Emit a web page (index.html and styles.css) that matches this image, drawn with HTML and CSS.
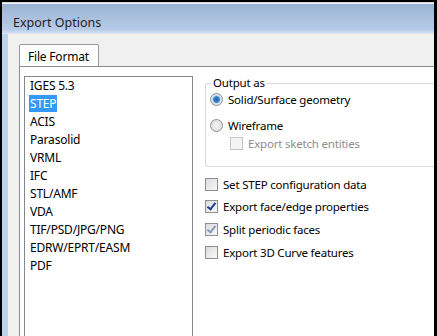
FILE: index.html
```html
<!DOCTYPE html>
<html lang="en">
<head>
  <meta charset="UTF-8">
  <title>Export Options</title>
  <link rel="stylesheet" href="styles.css">
</head>
<body>
  <div class="window">
    <div class="titlebar">Export Options</div>
    <div class="client">
      <div class="tabs">
        <div class="tab">File Format</div>
      </div>
      <div class="panel">
        <ul class="formats">
          <li>IGES 5.3</li>
          <li><span class="selected">STEP</span></li>
          <li>ACIS</li>
          <li>Parasolid</li>
          <li>VRML</li>
          <li>IFC</li>
          <li>STL/AMF</li>
          <li>VDA</li>
          <li>TIF/PSD/JPG/PNG</li>
          <li>EDRW/EPRT/EASM</li>
          <li>PDF</li>
        </ul>
        <div class="options">
          <fieldset class="group">
            <legend>Output as</legend>
            <div class="row"><span class="radio on"></span>Solid/Surface geometry</div>
            <div class="row wire"><span class="radio"></span>Wireframe</div>
            <div class="row sub disabled"><span class="check"></span>Export sketch entities</div>
          </fieldset>
          <div class="checks">
            <div class="row"><span class="check"></span>Set STEP configuration data</div>
            <div class="row"><span class="check on"></span>Export face/edge properties</div>
            <div class="row"><span class="check on dim"></span>Split periodic faces</div>
            <div class="row"><span class="check"></span>Export 3D Curve features</div>
          </div>
        </div>
      </div>
    </div>
  </div>
</body>
</html>
```

FILE: styles.css
```css
body {
  margin: 0;
  width: 437px;
  height: 336px;
  background: #000;
  overflow: hidden;
  font-family: 'Noto Sans', 'Open Sans', sans-serif;
  font-size: 11.5px;
  letter-spacing: -0.2px;
  color: #000;
}
.window {
  margin: 2px 3px 0 2px;
  height: 334px;
  display: flex;
  flex-direction: column;
  background: #bcd3ec;
  border-top: 1px solid #d8dde4;
}
.titlebar {
  height: 30px;
  padding-left: 11px;
  line-height: 38px;
  font-size: 12.5px;
  letter-spacing: 0;
  color: #1e1e1e;
  background: linear-gradient(#9cb3d3, #b5cbe7 85%, #dbe6f3);
  border-top: 1px solid #eef2f8;
  flex-shrink: 0;
}
.client {
  flex: 1;
  margin-left: 6px;
  padding: 8px 0 0 11px;
  background: #f0f0f0;
  border-top: 2px solid #f4efe8;
  display: flex;
  flex-direction: column;
  min-height: 0;
}
.tabs {
  display: flex;
  height: 22px;
}
.tab {
  padding: 0 9px 0 8px;
  line-height: 23px;
  font-size: 12px;
  background: #fff;
  border: 1px solid #9a9a9a;
  border-bottom: none;
  border-radius: 2px 2px 0 0;
  position: relative;
  z-index: 1;
}
.panel {
  flex: 1;
  background: #fff;
  border-left: 1px solid #8b8b8b;
  border-top: 1px solid #8b8b8b;
  padding: 9px 0 0 4px;
  display: flex;
  gap: 12px;
  min-height: 0;
}
.formats {
  margin: 0;
  padding: 0 0 0 5px;
  list-style: none;
  width: 162px;
  border: 1px solid #828790;
  border-bottom: none;
  font-size: 12px;
}
.formats li {
  height: 18px;
  line-height: 17px;
}
.selected {
  display: inline-block;
  background: #3399ff;
  color: #fff;
  padding: 0 1px;
  margin-left: -1px;
}
.options {
  flex: 1;
  display: flex;
  flex-direction: column;
}
.group {
  margin: 0;
  padding: 0 0 10px 4px;
  border: 1px solid #dcdcdc;
  border-right: none;
  border-radius: 3px 0 0 3px;
  height: 79px;
}
.group legend {
  padding: 0 2px;
  margin-left: 1px;
  line-height: 14px;
}
.row {
  display: flex;
  align-items: center;
  height: 18px;
  gap: 5px;
}
.wire {
  margin-top: 8px;
}
.sub {
  padding-left: 20px;
}
.disabled {
  color: #8d8d8d;
}
.radio {
  width: 11px;
  height: 11px;
  border: 1px solid #8f8f8f;
  border-radius: 50%;
  background: radial-gradient(#f4f4f4, #d8d8d8);
  flex-shrink: 0;
}
.radio.on {
  background: radial-gradient(circle, #2a5a96 0, #3e8ad6 3px, #c9dff3 4px, #e8e8e8 6px);
}
.check {
  width: 11px;
  height: 11px;
  border: 1px solid #8e8f8f;
  background: linear-gradient(135deg, #dcdcdc, #f8f8f8);
  flex-shrink: 0;
  position: relative;
}
.disabled .check {
  border-color: #c4c4c4;
  background: #f4f4f4;
}
.check.on::after {
  content: '';
  position: absolute;
  left: 3px;
  top: 0;
  width: 3px;
  height: 7px;
  border: solid #1c3f94;
  border-width: 0 2px 2px 0;
  transform: rotate(38deg);
}
.check.dim::after {
  border-color: #8a9bbd;
}
.checks {
  display: flex;
  flex-direction: column;
  gap: 4.7px;
  padding-top: 8px;
}
```
